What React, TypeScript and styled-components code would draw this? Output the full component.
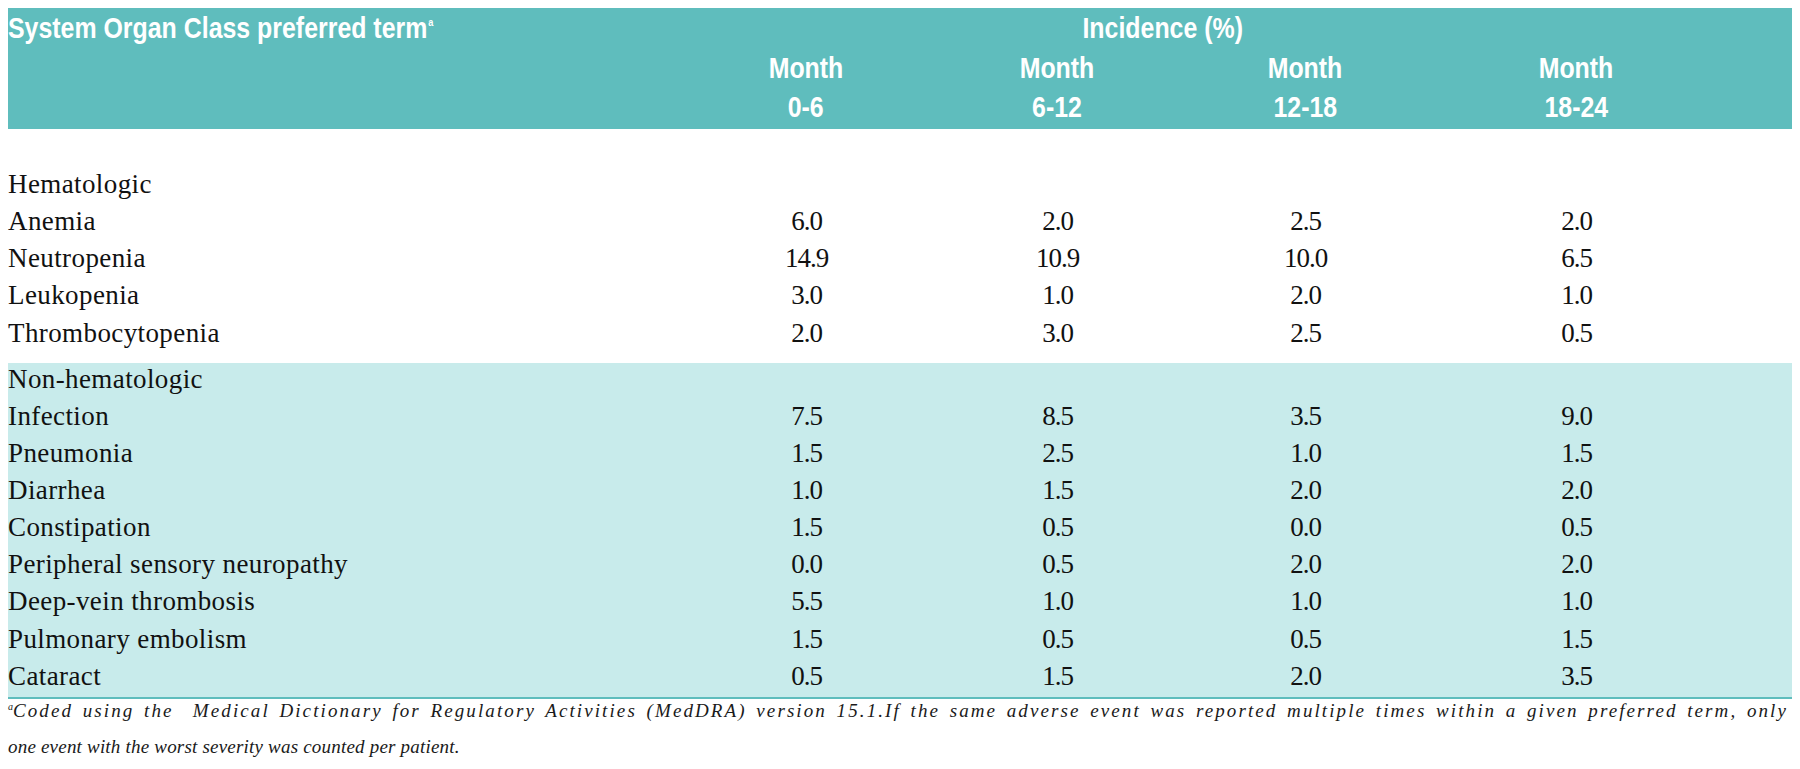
import React from "react";
import styled, { createGlobalStyle } from "styled-components";

const COLS = "673px 250px 252px 244px 298px 1fr";

const GlobalStyle = createGlobalStyle`
  html, body { margin: 0; padding: 0; background: #ffffff; }
  body { font-family: "Liberation Serif", "Times New Roman", serif; color: #111; }
`;

const Page = styled.div`
  padding: 8px 8px 0 8px;
  width: 1784px;
`;

const Header = styled.div`
  display: grid;
  grid-template-columns: ${COLS};
  grid-template-rows: 39px 82px;
  height: 121px;
  background: #5fbdbd;
  color: #ffffff;
  font-family: "Liberation Sans", Arial, sans-serif;
  font-weight: 700;
  font-size: 30px;
  line-height: 39px;
`;

const Condensed = styled.span<{ $origin?: string }>`
  display: inline-block;
  white-space: nowrap;
  transform: scaleX(0.83);
  transform-origin: ${(p) => p.$origin || "center"} center;
`;

const HeadLabel = styled.div`
  grid-column: 1;
  grid-row: 1;
`;

const HeadSup = styled.sup`
  font-size: 11px;
  vertical-align: top;
  line-height: 1;
  position: relative;
  top: 9px;
  margin-left: 1px;
`;

const HeadSpan = styled.div`
  grid-column: 2 / 6;
  grid-row: 1;
  text-align: center;
  padding-right: 80px;
`;

const HeadMonth = styled.div<{ $col: number }>`
  grid-column: ${(p) => p.$col};
  grid-row: 2;
  padding-top: 1px;
  display: flex;
  flex-direction: column;
  align-items: center;
`;

const Section = styled.div<{ $shaded?: boolean }>`
  background: ${(p) => (p.$shaded ? "#c8ebeb" : "transparent")};
  padding: ${(p) => (p.$shaded ? "0" : "38.9px 0 9.1px")};
  border-bottom: ${(p) => (p.$shaded ? "2px solid #5fbdbd" : "none")};
`;

const Row = styled.div<{ $pitch: number }>`
  display: grid;
  grid-template-columns: ${COLS};
  font-size: 27px;
  line-height: 32px;
  height: ${(p) => p.$pitch}px;
`;

const Label = styled.div`
  letter-spacing: 0.4px;
  white-space: nowrap;
`;

const Value = styled.div`
  text-align: center;
  letter-spacing: -1px;
  padding-left: 1px;
`;

const Footnote = styled.div`
  margin-top: -6px;
  font-style: italic;
  font-size: 19px;
  line-height: 36px;
  color: #1a1a1a;
`;

const FootLine = styled.div<{ $justify?: boolean }>`
  letter-spacing: ${(p) => (p.$justify ? "2.1px" : "0.2px")};
  text-align: ${(p) => (p.$justify ? "justify" : "left")};
  text-align-last: ${(p) => (p.$justify ? "justify" : "auto")};
  width: ${(p) => (p.$justify ? "1780px" : "auto")};
  white-space: nowrap;
`;

const FootSup = styled.sup`
  font-size: 10px;
  vertical-align: top;
  line-height: 1;
  position: relative;
  top: 9px;
  letter-spacing: 0;
`;

type Item = { label: string; values?: string[] };

const hematologic: Item[] = [
  { label: "Hematologic" },
  { label: "Anemia", values: ["6.0", "2.0", "2.5", "2.0"] },
  { label: "Neutropenia", values: ["14.9", "10.9", "10.0", "6.5"] },
  { label: "Leukopenia", values: ["3.0", "1.0", "2.0", "1.0"] },
  { label: "Thrombocytopenia", values: ["2.0", "3.0", "2.5", "0.5"] },
];

const nonHematologic: Item[] = [
  { label: "Non-hematologic" },
  { label: "Infection", values: ["7.5", "8.5", "3.5", "9.0"] },
  { label: "Pneumonia", values: ["1.5", "2.5", "1.0", "1.5"] },
  { label: "Diarrhea", values: ["1.0", "1.5", "2.0", "2.0"] },
  { label: "Constipation", values: ["1.5", "0.5", "0.0", "0.5"] },
  { label: "Peripheral sensory neuropathy", values: ["0.0", "0.5", "2.0", "2.0"] },
  { label: "Deep-vein thrombosis", values: ["5.5", "1.0", "1.0", "1.0"] },
  { label: "Pulmonary embolism", values: ["1.5", "0.5", "0.5", "1.5"] },
  { label: "Cataract", values: ["0.5", "1.5", "2.0", "3.5"] },
];

const months = [
  ["Month", "0-6"],
  ["Month", "6-12"],
  ["Month", "12-18"],
  ["Month", "18-24"],
];

function Rows({ items, pitch }: { items: Item[]; pitch: number }) {
  return (
    <>
      {items.map((it) => (
        <Row key={it.label} $pitch={pitch}>
          <Label>{it.label}</Label>
          {(it.values || []).map((v, i) => (
            <Value key={i}>{v}</Value>
          ))}
        </Row>
      ))}
    </>
  );
}

export default function App() {
  return (
    <>
      <GlobalStyle />
      <Page>
        <Header>
          <HeadLabel>
            <Condensed $origin="left">
              System Organ Class preferred term<HeadSup>a</HeadSup>
            </Condensed>
          </HeadLabel>
          <HeadSpan>
            <Condensed>Incidence (%)</Condensed>
          </HeadSpan>
          {months.map((m, i) => (
            <HeadMonth key={m[1]} $col={i + 2}>
              <Condensed>{m[0]}</Condensed>
              <Condensed>{m[1]}</Condensed>
            </HeadMonth>
          ))}
        </Header>
        <Section>
          <Rows items={hematologic} pitch={37.2} />
        </Section>
        <Section $shaded>
          <Rows items={nonHematologic} pitch={37.1} />
        </Section>
        <Footnote>
          <FootLine $justify>
            <FootSup>a</FootSup>Coded using the&nbsp; Medical Dictionary for Regulatory Activities (MedDRA) version 15.1.If the same adverse event was reported multiple times within a given preferred term, only
          </FootLine>
          <FootLine>one event with the worst severity was counted per patient.</FootLine>
        </Footnote>
      </Page>
    </>
  );
}
